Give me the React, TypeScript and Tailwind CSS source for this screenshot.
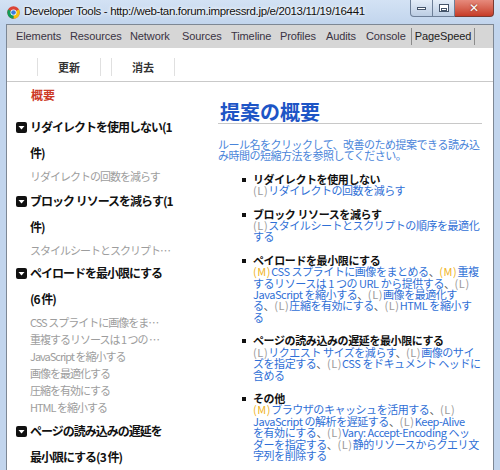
import React from "react";

const tabs: [string, number][] = [
  ["Elements", 54],
  ["Resources", 60],
  ["Network", 52],
  ["Sources", 49],
  ["Timeline", 49],
  ["Profiles", 46],
  ["Audits", 40],
  ["Console", 45],
];

type Seg = { t: string; k?: "L" | "M" | "x" };

// 右側の提案リスト (行ごとに折り返し済み)
const suggestions: { title: string; lines: Seg[][] }[] = [
  {
    title: "リダイレクトを使用しない",
    lines: [[{ t: "(L)", k: "L" }, { t: "リダイレクトの回数を減らす" }]],
  },
  {
    title: "ブロック リソースを減らす",
    lines: [
      [{ t: "(L)", k: "L" }, { t: "スタイルシートとスクリプトの順序を最適化" }],
      [{ t: "する" }],
    ],
  },
  {
    title: "ペイロードを最小限にする",
    lines: [
      [{ t: "(M)", k: "M" }, { t: "CSS スプライトに画像をまとめる" }, { t: "、", k: "x" }, { t: "(M)", k: "M" }, { t: "重複" }],
      [{ t: "するリソースは 1 つの URL から提供する" }, { t: "、", k: "x" }, { t: "(L)", k: "L" }],
      [{ t: "JavaScript を縮小する" }, { t: "、", k: "x" }, { t: "(L)", k: "L" }, { t: "画像を最適化す" }],
      [{ t: "る" }, { t: "、", k: "x" }, { t: "(L)", k: "L" }, { t: "圧縮を有効にする" }, { t: "、", k: "x" }, { t: "(L)", k: "L" }, { t: "HTML を縮小す" }],
      [{ t: "る" }],
    ],
  },
  {
    title: "ページの読み込みの遅延を最小限にする",
    lines: [
      [{ t: "(L)", k: "L" }, { t: "リクエスト サイズを減らす" }, { t: "、", k: "x" }, { t: "(L)", k: "L" }, { t: "画像のサイ" }],
      [{ t: "ズを指定する" }, { t: "、", k: "x" }, { t: "(L)", k: "L" }, { t: "CSS をドキュメント ヘッドに" }],
      [{ t: "含める" }],
    ],
  },
  {
    title: "その他",
    lines: [
      [{ t: "(M)", k: "M" }, { t: "ブラウザのキャッシュを活用する" }, { t: "、", k: "x" }, { t: "(L)", k: "L" }],
      [{ t: "JavaScript の解析を遅延する" }, { t: "、", k: "x" }, { t: "(L)", k: "L" }, { t: "Keep-Alive" }],
      [{ t: "を有効にする" }, { t: "、", k: "x" }, { t: "(L)", k: "L" }, { t: "Vary: Accept-Encoding ヘッ" }],
      [{ t: "ダーを指定する" }, { t: "、", k: "x" }, { t: "(L)", k: "L" }, { t: "静的リソースからクエリ文" }],
      [{ t: "字列を削除する" }],
    ],
  },
];

// 左側のルール一覧
const rules: { lines: string[]; subs: string[]; mt: string }[] = [
  { lines: ["リダイレクトを使用しない(1", "件)"], subs: ["リダイレクトの回数を減らす"], mt: "mt-[6px]" },
  { lines: ["ブロック リソースを減らす(1", "件)"], subs: ["スタイルシートとスクリプト…"], mt: "mt-[3px]" },
  {
    lines: ["ペイロードを最小限にする", "(6 件)"],
    subs: [
      "CSS スプライトに画像をま…",
      "重複するリソースは 1 つの …",
      "JavaScript を縮小する",
      "画像を最適化する",
      "圧縮を有効にする",
      "HTML を縮小する",
    ],
    mt: "mt-[1px]",
  },
  { lines: ["ページの読み込みの遅延を", "最小限にする(3 件)"], subs: [], mt: "mt-[2px]" },
];

function ChromeIcon() {
  return (
    <svg width="13" height="13" viewBox="0 0 24 24">
      <circle cx="12" cy="12" r="11.5" fill="#db4437" />
      <path d="M12 12 L22 6.5 A11.5 11.5 0 0 1 12 23.5 Z" fill="#f4c20d" />
      <path d="M12 12 L12 23.5 A11.5 11.5 0 0 1 2 6.5 Z" fill="#0f9d58" />
      <circle cx="12" cy="12" r="5.6" fill="#fff" />
      <circle cx="12" cy="12" r="4.3" fill="#3b7ddd" />
    </svg>
  );
}

function RuleIcon() {
  return (
    <svg width="11" height="11" viewBox="0 0 11 11" className="shrink-0">
      <rect x="0" y="0" width="11" height="11" rx="2" fill="#111" />
      <polygon points="2.5,4 8.5,4 5.5,7.5" fill="#fff" />
    </svg>
  );
}

export default function App() {
  return (
    <div className="w-[500px] h-[470px] overflow-hidden bg-[#c2d5ed] flex flex-col font-['Noto_Sans_CJK_JP',sans-serif] relative">
      {/* タイトルバー */}
      <div className="h-[24px] shrink-0 flex items-center pl-[7px] bg-gradient-to-b from-[#d3e2f4] to-[#c2d5ed]">
        <ChromeIcon />
        <span className="ml-[4px] text-[11.5px] text-[#111] font-['Liberation_Sans',sans-serif] tracking-[-0.35px] [text-shadow:0_0_5px_#fff,0_0_3px_#fff] whitespace-nowrap">
          Developer Tools - http://web-tan.forum.impressrd.jp/e/2013/11/19/16441
        </span>
      </div>

      {/* ウィンドウボタン */}
      <div className="absolute top-0 right-[6px] flex h-[17px]">
        <div className="w-[23px] h-full border border-t-0 border-[#6d7f98] rounded-bl-[4px] bg-gradient-to-b from-[#e4edf8] to-[#bccde3] flex items-center justify-center">
          <div className="w-[9px] h-[3px] bg-white border border-[#44546a]" />
        </div>
        <div className="w-[22px] h-full border border-t-0 border-l-0 border-[#6d7f98] bg-gradient-to-b from-[#e4edf8] to-[#bccde3] flex items-center justify-center">
          <div className="w-[10px] h-[8px] border border-[#44546a] bg-white flex items-end justify-center">
            <div className="w-[6px] h-[3px] border border-[#44546a]" />
          </div>
        </div>
        <div className="w-[39px] h-full border border-t-0 border-l-0 border-[#7a3a32] rounded-br-[4px] bg-gradient-to-b from-[#e68a7c] to-[#c63a26] flex items-center justify-center">
          <span className="text-white font-bold text-[12px] leading-none font-['DejaVu_Sans',sans-serif] [text-shadow:0_0_2px_#6b2018]">✕</span>
        </div>
      </div>

      {/* 本体 */}
      <div className="flex-1 min-h-0 mx-[6px] border-t border-x border-[#7d8794] bg-white flex flex-col overflow-hidden">
        {/* タブ */}
        <div className="h-[23px] shrink-0 bg-[#d6d6d6] flex items-center pl-[9px] text-[11px] text-[#3a3343] font-['Liberation_Sans',sans-serif] tracking-[-0.1px]">
          {tabs.map(([name, w]) => (
            <span key={name} className="shrink-0 whitespace-nowrap" style={{ width: w }}>
              {name}
            </span>
          ))}
          <span className="w-[64px] h-[17px] shrink-0 border-x border-[#8b8b8b] flex items-center justify-center text-[#222]">
            PageSpeed
          </span>
        </div>

        {/* ツールバー */}
        <div className="h-[34px] shrink-0 border-b border-[#c9c9c9] flex items-start pt-[10px] pl-[30px] text-[11px] font-bold text-[#333]">
          <div className="w-[64px] h-[18px] border-x border-[#e0e0e0] flex items-center justify-center">更新</div>
          <div className="w-[64px] h-[18px] ml-[10px] border-x border-[#e0e0e0] flex items-center justify-center">消去</div>
        </div>

        {/* コンテンツ */}
        <div className="flex-1 min-h-0 flex">
          {/* 左ペイン */}
          <div className="w-[204px] shrink-0 pl-[9px]">
            <div className="pl-[15px] leading-[26px] text-[12px] font-bold text-[#cc3a26]">概要</div>
            {rules.map((r, i) => (
              <div key={i} className={r.mt}>
                <div className="flex items-start">
                  <div className="h-[26px] flex items-center">
                    <RuleIcon />
                  </div>
                  <div className="ml-[3px] text-[12px] font-bold leading-[26px] text-[#111] tracking-[-1px] whitespace-nowrap">
                    {r.lines.map((l) => (
                      <div key={l}>{l}</div>
                    ))}
                  </div>
                </div>
                {r.subs.length > 0 && (
                  <div className="mt-[2px] pl-[14px] text-[11px] leading-[17px] text-[#9d9d9d] tracking-[-1px] whitespace-nowrap">
                    {r.subs.map((s) => (
                      <div key={s}>{s}</div>
                    ))}
                  </div>
                )}
              </div>
            ))}
          </div>

          {/* 右ペイン */}
          <div className="flex-1 min-w-0 pl-[7px] pr-[11px]">
            <div className="pt-[19px] pl-[2px] leading-[22px] text-[20px] font-bold text-[#1d55c6] border-b border-[#c8c8c8]">
              提案の概要
            </div>
            <div className="mt-[15px] text-[11px] leading-[11.4px] text-[#4a85da] tracking-[-0.5px] whitespace-nowrap">
              <div>ルール名をクリックして、改善のため提案できる読み込</div>
              <div>み時間の短縮方法を参照してください。</div>
            </div>
            <div className="pl-[35px]">
              {suggestions.map((s) => (
                <div key={s.title} className="mt-[12px] relative">
                  <span className="absolute left-[-11px] top-[4px] w-[4px] h-[4px] bg-[#111]" />
                  <div className="text-[11px] leading-[11.4px] font-bold text-[#111] tracking-[-0.4px] whitespace-nowrap">
                    {s.title}
                  </div>
                  <div className="text-[11px] leading-[11.4px] tracking-[-0.45px] whitespace-nowrap">
                    {s.lines.map((line, i) => (
                      <div key={i}>
                        {line.map((seg, j) => (
                          <span
                            key={j}
                            className={
                              seg.k === "L"
                                ? "text-[#9a9a9a] tracking-[0.6px]"
                                : seg.k === "M"
                                ? "text-[#f0b324] tracking-[0.6px]"
                                : seg.k === "x"
                                ? "text-[#555]"
                                : "text-[#2f6fd6]"
                            }
                          >
                            {seg.t}
                          </span>
                        ))}
                      </div>
                    ))}
                  </div>
                </div>
              ))}
            </div>
          </div>
        </div>
      </div>
    </div>
  );
}
